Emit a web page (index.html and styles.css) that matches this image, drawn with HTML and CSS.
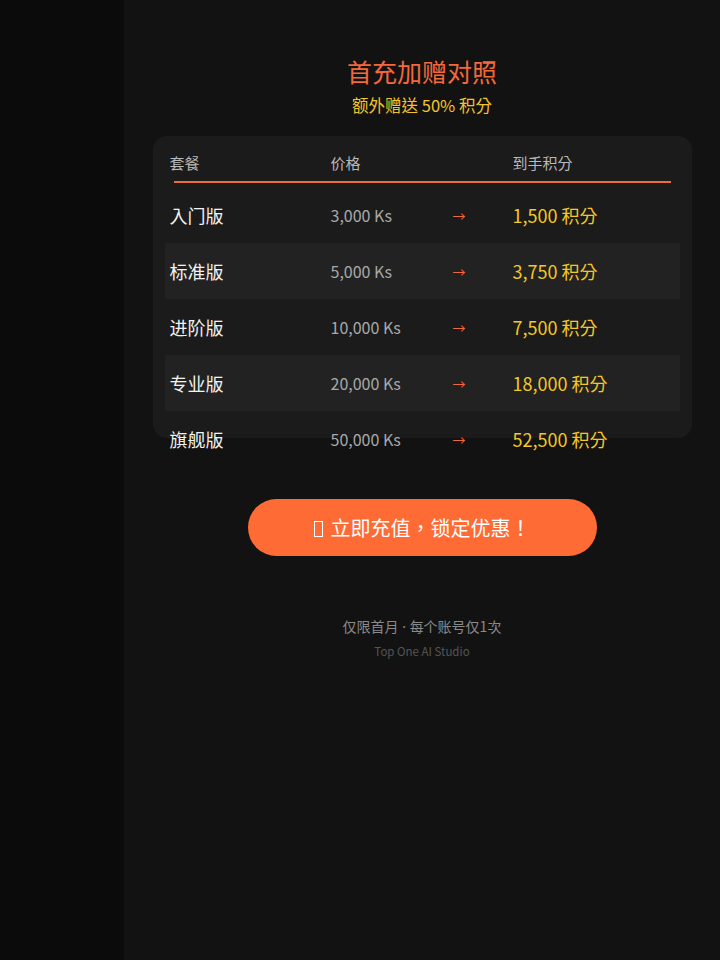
FILE: index.html
```html
<!DOCTYPE html>
<html lang="zh-TW">
<head>
  <meta charset="UTF-8" />
  <meta name="viewport" content="width=device-width,initial-scale=1.0" />
  <title>首充加赠对照 | Top One AI Studio</title>
  <link rel="stylesheet" href="styles.css">
</head>
<body>

<!-- SIDE STRIP -->
<aside class="side"></aside>

<main class="page">
  <!-- TITLE -->
  <h1 class="title">首充加赠对照</h1>
  <p class="subtitle">额外赠送 50% 积分</p>

  <!-- TABLE CARD -->
  <section class="card">
    <div class="table-head">
      <span>套餐</span>
      <span>价格</span>
      <span></span>
      <span>到手积分</span>
    </div>
    <div class="row">
      <span class="plan">入门版</span>
      <span class="price">3,000 Ks</span>
      <span class="arrow">→</span>
      <span class="points">1,500 积分</span>
    </div>
    <div class="row striped">
      <span class="plan">标准版</span>
      <span class="price">5,000 Ks</span>
      <span class="arrow">→</span>
      <span class="points">3,750 积分</span>
    </div>
    <div class="row">
      <span class="plan">进阶版</span>
      <span class="price">10,000 Ks</span>
      <span class="arrow">→</span>
      <span class="points">7,500 积分</span>
    </div>
    <div class="row striped">
      <span class="plan">专业版</span>
      <span class="price">20,000 Ks</span>
      <span class="arrow">→</span>
      <span class="points">18,000 积分</span>
    </div>
    <div class="row">
      <span class="plan">旗舰版</span>
      <span class="price">50,000 Ks</span>
      <span class="arrow">→</span>
      <span class="points">52,500 积分</span>
    </div>
  </section>

  <!-- CTA -->
  <button class="cta" type="button"><span class="missing-glyph"></span>立即充值，锁定优惠！</button>

  <!-- FOOTER -->
  <p class="note">仅限首月<span class="sep"> · </span>每个账号仅1次</p>
  <p class="brand">Top One AI Studio</p>
</main>

</body>
</html>
```

FILE: styles.css
```css
* {
  box-sizing: border-box;
  margin: 0;
  padding: 0;
}
body {
  display: flex;
  min-height: 960px;
  font-family: "Noto Sans CJK TC", "Noto Sans", sans-serif;
  background-color: #121212;
  color: #eee;
}

/* SIDE STRIP */
.side {
  width: 124px;
  flex-shrink: 0;
  background-color: #0b0b0b;
}

/* MAIN COLUMN */
.page {
  flex: 1;
  display: flex;
  flex-direction: column;
  align-items: center;
  padding-top: 55px;
}
.title {
  font-size: 25px;
  line-height: 32px;
  font-weight: 400;
  color: #f4683a;
}
.subtitle {
  margin-top: 6px;
  font-size: 16.5px;
  line-height: 24px;
  color: #f2c52c;
}

/* TABLE CARD */
.card {
  width: 539px;
  height: 302px;
  margin-top: 19px;
  padding: 12px;
  border-radius: 14px;
  background-color: #1b1b1b;
}
.table-head,
.row {
  display: grid;
  grid-template-columns: 161px 122px 60px 171px;
}
.table-head span,
.row span {
  padding-left: 5px;
}
.table-head {
  position: relative;
  height: 35px;
  margin-bottom: 4px;
  font-size: 15px;
  line-height: 30px;
  color: #b9b9b9;
}
.table-head::after {
  content: "";
  position: absolute;
  left: 9px;
  right: 9px;
  bottom: 0;
  height: 2px;
  background-color: #f06a3e;
}
.row {
  height: 56px;
  align-items: center;
}
.row.striped {
  background-color: #222;
}
.plan {
  font-size: 18px;
  color: #f2f2f2;
}
.price {
  font-size: 16px;
  color: #a8a8a8;
}
.arrow {
  font-size: 13px;
  color: #ee6a3c;
}
.points {
  font-size: 18px;
  color: #f5c823;
}

/* CTA BUTTON */
.cta {
  width: 349px;
  height: 57px;
  margin-top: 61px;
  border: none;
  border-radius: 29px;
  background-color: #ff6b35;
  color: #fff;
  font-family: inherit;
  font-size: 20px;
  cursor: pointer;
}
.missing-glyph {
  display: inline-block;
  width: 9px;
  height: 16px;
  margin-right: 8px;
  border: 1px solid #fff;
  vertical-align: -1px;
}

/* FOOTER */
.note {
  margin-top: 60px;
  font-size: 14px;
  line-height: 20px;
  color: #8a8a8a;
}
.note .sep {
  font-family: "Noto Sans", sans-serif;
}
.brand {
  margin-top: 6px;
  font-size: 11.5px;
  line-height: 16px;
  color: #555;
}
```
